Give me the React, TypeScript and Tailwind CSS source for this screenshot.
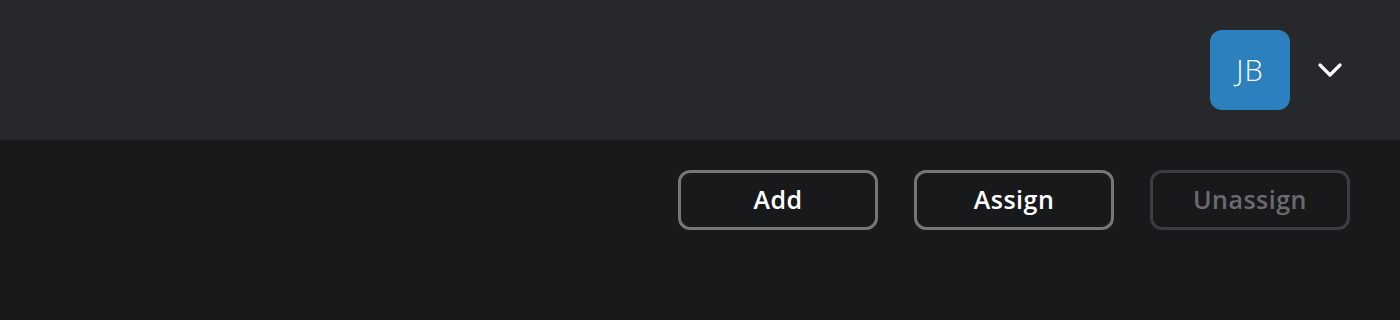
const App = () => {
	return (
		<div className="w-[1400px] h-[320px] flex flex-col bg-[#18191b] font-['Open_Sans',sans-serif]">
			{/* header */}
			<div className="h-[140px] bg-[#27282c] flex items-center justify-end pr-[30px]">
				<div className="w-[80px] h-[80px] rounded-[12px] bg-[#2b80bd] flex items-center justify-center text-white text-[29px] font-light tracking-[1px]">
					JB
				</div>
				<button className="w-[80px] h-[80px] flex items-center justify-center text-white">
					<svg width="30" height="30" viewBox="0 0 24 24" fill="none" stroke="currentColor" strokeWidth="2.6" strokeLinecap="round" strokeLinejoin="round">
						<path d="M4 8l8 8 8-8" />
					</svg>
				</button>
			</div>

			{/* actions */}
			<div className="flex justify-end gap-[36px] pt-[30px] pr-[50px]">
				<button className="w-[200px] h-[60px] rounded-[12px] border-[3px] border-[#767676] text-white text-[25px] font-semibold tracking-[0.5px]">
					Add
				</button>
				<button className="w-[200px] h-[60px] rounded-[12px] border-[3px] border-[#767676] text-white text-[25px] font-semibold tracking-[0.5px]">
					Assign
				</button>
				<button disabled className="w-[200px] h-[60px] rounded-[12px] border-[3px] border-[#3c3d40] text-[#6a6b6d] text-[25px] font-semibold tracking-[0.5px]">
					Unassign
				</button>
			</div>
		</div>
	);
};

export default App;
